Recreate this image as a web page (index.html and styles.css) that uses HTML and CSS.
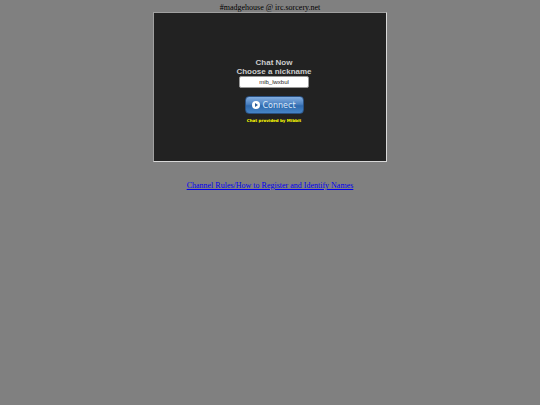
FILE: index.html
```html
<!DOCTYPE html>
<html lang="en">
<head>
<meta charset="utf-8">
<title>#madgehouse @ irc.sorcery.net</title>
<link rel="stylesheet" href="styles.css">
</head>
<body>
<header class="channel">#madgehouse @ irc.sorcery.net</header>
<main class="panel">
  <form class="login">
    <h1 class="title">Chat Now</h1>
    <label class="title" for="nick">Choose a nickname</label>
    <input class="nick" id="nick" type="text" value="mib_lwxbul">
    <button class="connect" type="button">
      <svg class="arrow" viewBox="0 0 8 8" aria-hidden="true"><circle cx="4" cy="4" r="4" fill="#fff"/><path d="M3 2 6 4 3 6Z" fill="#2b5c98"/></svg>
      Connect
    </button>
    <p class="credit">Chat provided by Mibbit</p>
  </form>
</main>
<a class="rules" href="#">Channel Rules/How to Register and Identify Names</a>
</body>
</html>
```
FILE: styles.css
```css
body {
  margin: 0;
  padding-top: 3px;
  background: #808080;
  color: #000;
  font: 8px/9px "Liberation Serif", serif;
  display: flex;
  flex-direction: column;
  align-items: center;
}
.panel {
  box-sizing: border-box;
  width: 234px;
  max-width: 100%;
  min-height: 150px;
  padding: 45px 0 0 8px;
  border: 1px solid;
  border-color: #a0a0a0 #d8d8d8 #d8d8d8 #a0a0a0;
  background: #222;
}
.login {
  display: flex;
  flex-direction: column;
  align-items: center;
  font-family: "Liberation Sans", sans-serif;
}
.title {
  margin: 0;
  font-size: 8px;
  line-height: 9px;
  font-weight: bold;
  color: #ccc;
}
.nick {
  box-sizing: border-box;
  width: 70px;
  height: 12px;
  padding: 0;
  border: 1px solid #999;
  border-radius: 2px;
  background: #fff;
  color: #222;
  font: 6px "Liberation Sans", sans-serif;
  text-align: center;
}
.connect {
  box-sizing: border-box;
  width: 59px;
  height: 18px;
  margin: 8px 0 4px;
  padding: 0;
  display: flex;
  align-items: center;
  justify-content: center;
  gap: 2px;
  border: 1px solid #2a5080;
  border-radius: 4px;
  background: linear-gradient(#83aee0, #4a80c0 45%, #2f69ad 55%, #4685c6);
  color: #dceafa;
  font: 8px "DejaVu Sans", sans-serif;
}
.arrow {
  width: 8px;
  height: 8px;
}
.credit {
  margin: 0;
  color: #ff0;
  font: bold 4px/6px "DejaVu Sans", sans-serif;
}
.rules {
  margin-top: 19px;
  color: #00e;
}
```
